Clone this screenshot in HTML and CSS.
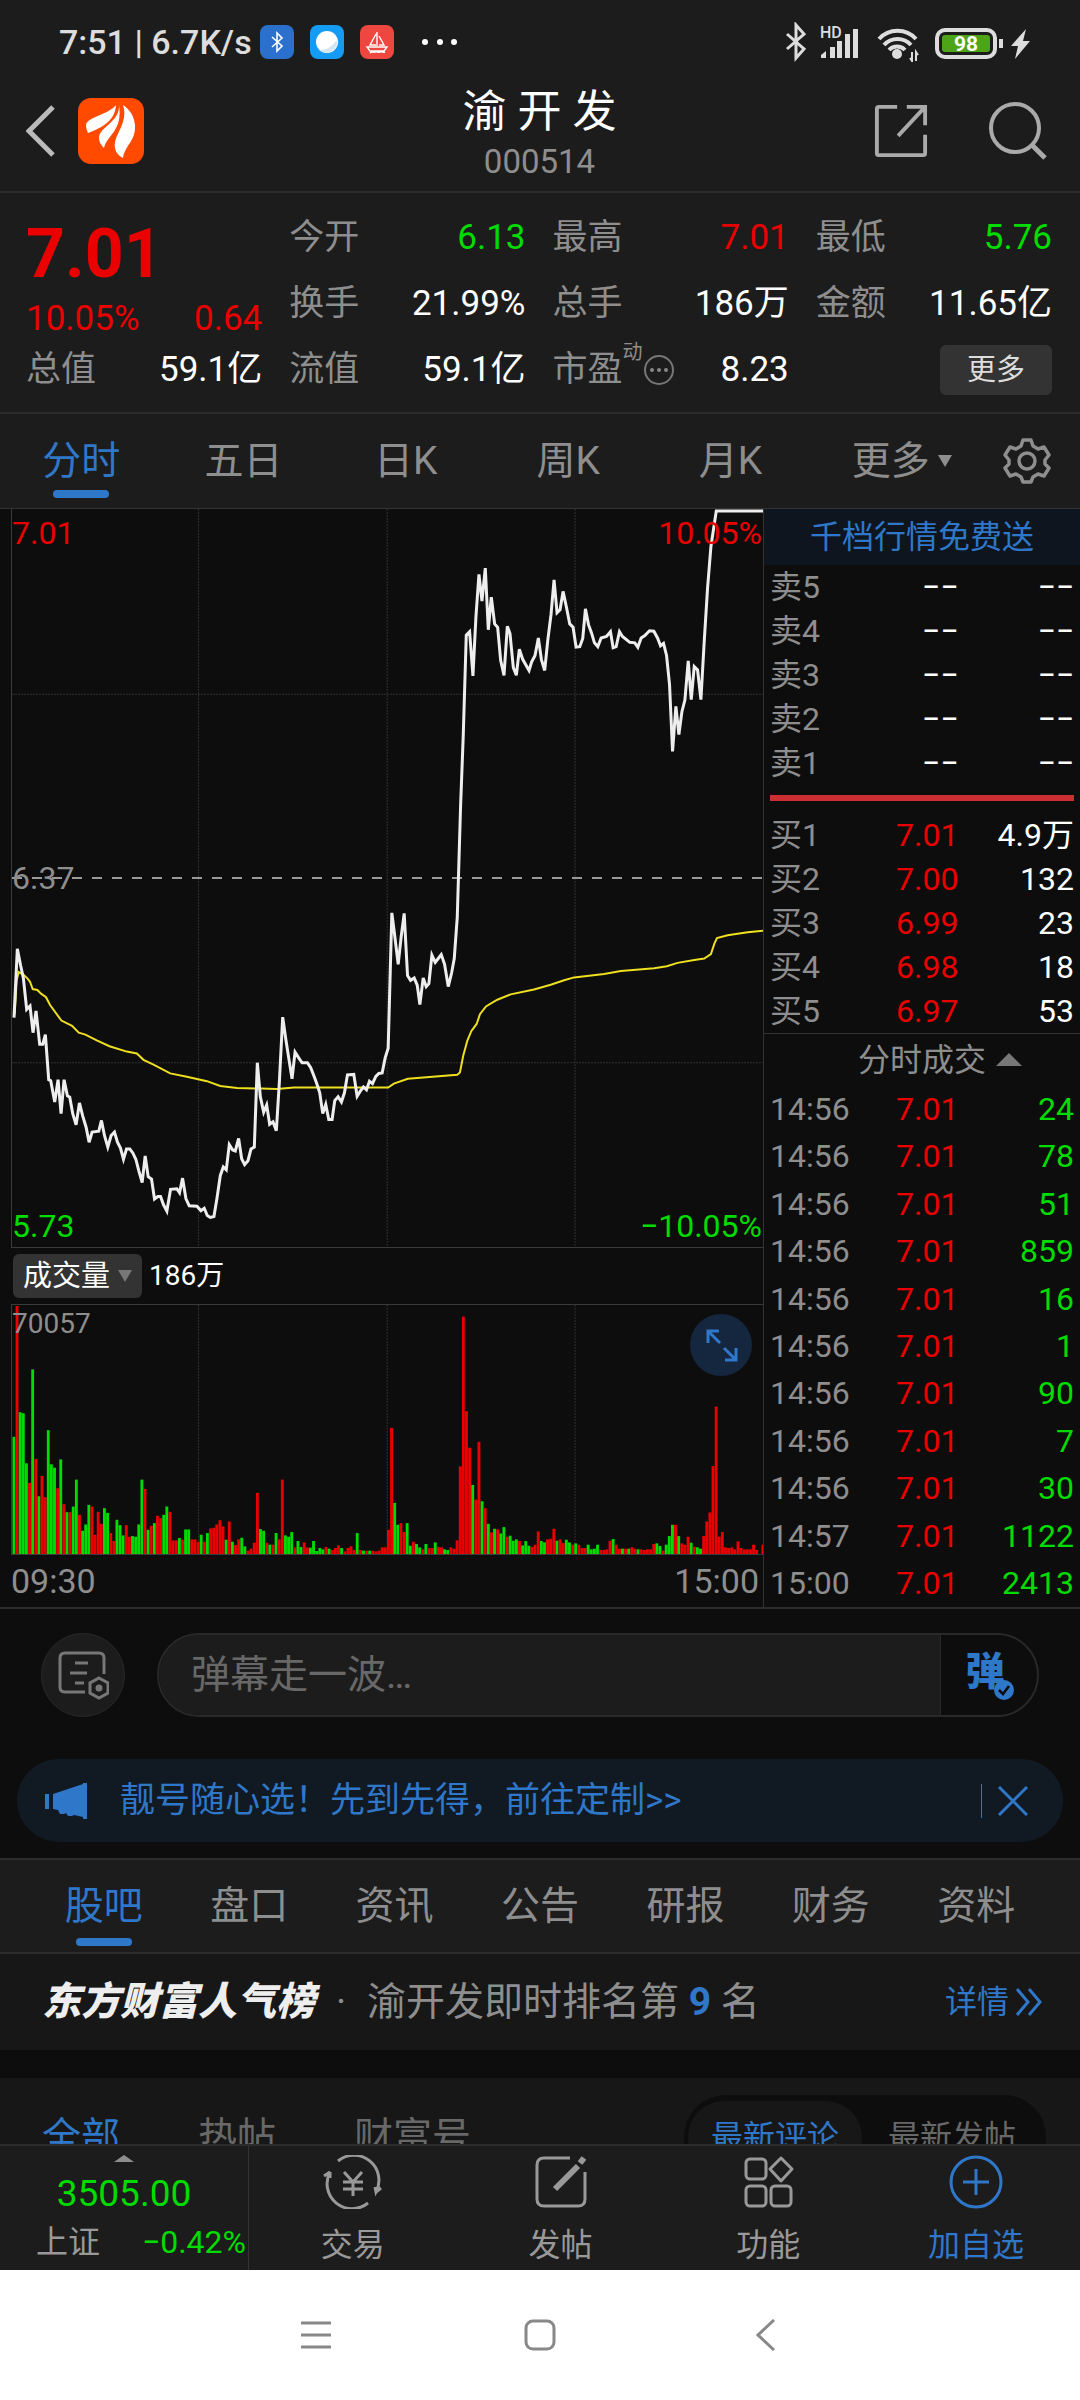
FILE: index.html
```html
<!DOCTYPE html>
<html lang="zh-CN">
<head>
    <meta charset="utf-8">
    <meta name="viewport" content="width=device-width">
    <title>渝开发 000514</title>
    <link rel="stylesheet" href="styles.css">
</head>
<body>

<div class="status-bar">
    <span class="status-time">7:51 | 6.7K/s</span>
    <svg class="app-icon" viewBox="0 0 34 34"><rect width="34" height="34" rx="8" fill="#2a70cc"/><path d="M12 12l10 9-5 5V8l5 5-10 9" fill="none" stroke="#fff" stroke-width="1.6"/></svg>
    <svg class="app-icon" viewBox="0 0 34 34"><rect width="34" height="34" rx="8" fill="#149cf5"/><circle cx="17" cy="17" r="11" fill="#fff"/><path d="M27 15a11 11 0 0 1-18 10c9 0 13-4 18-10z" fill="#d5e6f2"/></svg>
    <svg class="app-icon" viewBox="0 0 34 34"><rect width="34" height="34" rx="8" fill="#ee4740"/><path d="M17 7v14M16 9l-6 11h6M19 11l5 9h-5M7 22h20l-3 4h-14zM10 28c2-2 3 0 5-1s3 1 5 0 3 1 5 0" fill="none" stroke="#fff" stroke-width="1.4"/></svg>
    <svg class="status-dots" viewBox="0 0 40 8"><g fill="#fff"><circle cx="5" cy="4" r="3"/><circle cx="20" cy="4" r="3"/><circle cx="34" cy="4" r="3"/></g></svg>
    <svg class="status-icons" viewBox="0 0 250 40">
        <path d="M7 12l17 15-8 9V3l8 9L7 27" fill="none" stroke="#ddd" stroke-width="3"/>
        <g fill="#ddd">
            <path d="M41 36v-3l5-4v7zM50 25h5v11h-5zM57 19h5v17h-5zM65 12h5v24h-5zM73 7h5v29h-5z"/>
            <circle cx="117" cy="32" r="5"/>
            <path d="M219 17h4v9h-4zM246 7l-15 17h7l-3 13 15-18h-7z"/>
        </g>
        <path d="M99 17a25 25 0 0 1 37 0M104 23a18 18 0 0 1 27 0M109 28a11 11 0 0 1 16 0" fill="none" stroke="#ddd" stroke-width="4"/>
        <path d="M132 30v9l-2-3M136 39v-9l2 3" fill="none" stroke="#ddd" stroke-width="2"/>
        <rect x="157" y="8" width="58" height="27" rx="8" fill="none" stroke="#ddd" stroke-width="4"/>
        <rect x="162" y="13" width="48" height="17" rx="3" fill="#4da416"/>
        <text x="186" y="29" class="battery-text">98</text>
        <text x="40" y="16" class="hd-text">HD</text>
    </svg>
</div>

<header class="header">
    <button class="icon-button back" aria-label="返回">
        <svg viewBox="0 0 30 52"><path d="M27 2L3 26l24 24" fill="none" stroke="#bbb" stroke-width="5"/></svg>
    </button>
    <svg class="logo" viewBox="0 0 66 66">
        <rect width="66" height="66" rx="13" fill="#ff4a00"/>
        <g fill="#fff">
            <path d="M38 7C30 17 9 19 8 27c0 3 1 6 2 8 10-4 27-10 28-28z"/>
            <path d="M41 7c1 17-20 22-20 33 0 4 2 7 5 10 3-13 19-17 15-43z"/>
            <path d="M45 7c6 19-10 29-8 43 1 5 4 8 8 10 2-13 13-17 12-33C56 17 51 11 45 7z"/>
        </g>
    </svg>
    <div class="header-title">
        <h1>渝 开 发</h1>
        <div class="stock-code">000514</div>
    </div>
    <button class="icon-button share" aria-label="分享">
        <svg viewBox="0 0 56 56"><path d="M24 3H5q-2 0-2 2v46q0 2 2 2h46q2 0 2-2V32M34 3h19v19M53 3L25 33" fill="none" stroke="#aaa" stroke-width="4"/></svg>
    </button>
    <button class="icon-button search" aria-label="搜索">
        <svg viewBox="0 0 60 60"><circle cx="27" cy="27" r="24" fill="none" stroke="#aaa" stroke-width="4"/><path d="M44 44l13 13" stroke="#aaa" stroke-width="5"/></svg>
    </button>
</header>

<section class="quote">
    <div class="quote-col">
        <div class="price">7.01</div>
        <div class="change"><span>10.05%</span><span>0.64</span></div>
        <div class="quote-row"><span>总值</span><b>59.1亿</b></div>
    </div>
    <div class="quote-col">
        <div class="quote-row"><span>今开</span><b class="down">6.13</b></div>
        <div class="quote-row"><span>换手</span><b>21.99%</b></div>
        <div class="quote-row"><span>流值</span><b>59.1亿</b></div>
    </div>
    <div class="quote-col">
        <div class="quote-row"><span>最高</span><b class="up">7.01</b></div>
        <div class="quote-row"><span>总手</span><b>186万</b></div>
        <div class="quote-row">
            <span class="pe">市盈<sup>动</sup><svg viewBox="0 0 32 32"><circle cx="16" cy="16" r="14" fill="none" stroke="#777" stroke-width="2"/><g fill="#888"><circle cx="9" cy="16" r="2"/><circle cx="16" cy="16" r="2"/><circle cx="23" cy="16" r="2"/></g></svg></span>
            <b>8.23</b>
        </div>
    </div>
    <div class="quote-col">
        <div class="quote-row"><span>最低</span><b class="down">5.76</b></div>
        <div class="quote-row"><span>金额</span><b>11.65亿</b></div>
        <div class="quote-row right"><button class="more-button">更多</button></div>
    </div>
</section>

<nav class="tabs">
    <button class="tab active">分时</button>
    <button class="tab">五日</button>
    <button class="tab">日K</button>
    <button class="tab">周K</button>
    <button class="tab">月K</button>
    <button class="tab tab-more">更多<svg class="caret" viewBox="0 0 14 12"><path d="M0 0h14L7 12z" fill="#8e8e8e"/></svg></button>
    <button class="settings" aria-label="设置">
        <svg viewBox="0 0 48 48" fill="none" stroke="#8e8e8e" stroke-width="3.5" stroke-linejoin="round"><path d="M20 3h8l2 6 5 3 6-2 5 8-4 5v4l4 4-5 8-6-2-5 3-2 5h-8l-2-5-5-3-6 2-5-8 4-4v-4l-4-5 5-8 6 2 5-3z"/><circle cx="24" cy="24" r="8"/></svg>
    </button>
</nav>

<main class="content">
    <section class="market">
        <div class="charts">
            <div class="price-chart">
                <svg viewBox="36 18 2250 1522" preserveAspectRatio="none">
                    <g class="grid-lines">
                        <path d="M595 18V1540M1160 18V1540M1723 18V1540M36 400H2286M36 1160H2286"/>
                    </g>
                    <path class="mid-line" d="M36 779H2286"/>
                    <polyline class="avg-line" points="44,1060 50,990 56,973 70,978 82,986 90,993 98,1008 112,1010 124,1018 138,1025 150,1041 184,1073 216,1084 236,1098 256,1102 290,1114 328,1126 380,1137 410,1141 430,1154 460,1164 510,1182 560,1189 620,1198 660,1208 710,1212 830,1214 880,1211 1163,1211 1180,1203 1222,1193 1370,1185 1378,1180 1388,1145 1400,1115 1412,1095 1428,1080 1438,1060 1456,1044 1490,1030 1530,1019 1600,1009 1650,999 1690,990 1720,984 1810,977 1860,971 1960,965 1998,961 2030,954 2080,948 2110,945 2130,936 2140,915 2148,903 2180,897 2240,891 2286,888"/>
                    <polyline class="price-line" points="42,1067 52,925 62,960 70,985 80,1050 90,1043 99,1098 108,1053 119,1122 128,1122 136,1102 146,1195 152,1197 164,1241 174,1195 183,1265 192,1195 202,1228 209,1231 218,1265 228,1288 238,1243 248,1270 258,1293 267,1324 276,1303 296,1301 304,1279 313,1310 323,1334 333,1310 343,1303 352,1324 361,1336 370,1359 379,1338 389,1338 398,1346 407,1359 416,1383 426,1407 435,1352 444,1395 454,1400 463,1441 473,1436 481,1436 490,1453 500,1466 511,1421 530,1420 538,1428 547,1398 557,1440 567,1455 590,1456 602,1465 612,1460 621,1475 630,1479 641,1477 650,1440 660,1393 669,1375 678,1381 687,1329 697,1340 705,1342 715,1316 724,1358 733,1370 743,1362 752,1338 762,1334 771,1160 780,1230 790,1262 799,1247 808,1287 818,1282 828,1300 837,1200 847,1066 856,1110 865,1150 875,1193 884,1138 895,1150 905,1160 921,1160 931,1170 941,1188 950,1205 958,1222 967,1265 976,1246 985,1277 995,1277 1003,1238 1013,1230 1023,1241 1032,1222 1041,1185 1060,1184 1070,1229 1080,1218 1089,1210 1098,1216 1107,1198 1116,1203 1126,1188 1135,1182 1145,1181 1154,1150 1163,1130 1174,851 1183,900 1193,957 1202,900 1211,852 1221,980 1230,990 1241,985 1250,1000 1258,1040 1268,985 1277,1003 1285,997 1294,938 1304,953 1313,945 1322,937 1332,957 1343,1003 1353,975 1361,945 1370,860 1380,630 1388,484 1397,278 1407,271 1417,362 1426,240 1435,153 1444,208 1454,140 1463,267 1472,200 1482,255 1491,262 1500,330 1510,361 1520,260 1528,275 1538,345 1547,361 1556,307 1566,328 1585,351 1593,333 1603,320 1613,284 1622,328 1632,351 1641,290 1651,235 1660,164 1669,232 1678,226 1687,188 1697,220 1707,255 1717,262 1726,303 1737,302 1746,285 1754,224 1763,256 1772,273 1781,294 1791,302 1801,284 1817,281 1829,271 1837,304 1846,302 1856,271 1865,281 1887,293 1902,294 1911,303 1921,284 1932,279 1946,269 1959,270 1970,284 1979,300 1988,295 1997,320 2006,380 2015,518 2025,425 2034,483 2043,436 2052,412 2062,331 2071,411 2080,343 2090,350 2100,411 2110,290 2120,180 2130,95 2146,22 2286,22"/>
                </svg>
                <span class="axis top-left up">7.01</span>
                <span class="axis top-right up">10.05%</span>
                <span class="axis mid-left">6.37</span>
                <span class="axis bottom-left down">5.73</span>
                <span class="axis bottom-right down">−10.05%</span>
            </div>
            <div class="volume-bar">
                <button class="indicator">成交量<svg class="caret" viewBox="0 0 14 12"><path d="M0 0h14L7 12z" fill="#777"/></svg></button>
                <span>186万</span>
            </div>
            <div class="volume-chart">
                <svg id="volume" viewBox="36 0 2250 750" preserveAspectRatio="none">
                    <g class="grid-lines"><path d="M595 0V750M1160 0V750M1723 0V750"/></g>
                </svg>
                <span class="axis volume-max">70057</span>
                <button class="expand" aria-label="全屏">
                    <svg viewBox="0 0 62 62"><path d="M29 17H18v12M18 17l12 12M35 46h11V34M46 46L34 34" fill="none" stroke="#2f77c9" stroke-width="3"/></svg>
                </button>
            </div>
            <div class="time-axis"><span>09:30</span><span>15:00</span></div>
        </div>

        <aside class="order-book">
            <a class="promo" href="#">千档行情免费送</a>
            <table class="levels">
                <tr><th>卖5</th><td>−−</td><td>−−</td></tr>
                <tr><th>卖4</th><td>−−</td><td>−−</td></tr>
                <tr><th>卖3</th><td>−−</td><td>−−</td></tr>
                <tr><th>卖2</th><td>−−</td><td>−−</td></tr>
                <tr><th>卖1</th><td>−−</td><td>−−</td></tr>
            </table>
            <div class="ratio"></div>
            <table class="levels">
                <tr><th>买1</th><td class="up">7.01</td><td>4.9万</td></tr>
                <tr><th>买2</th><td class="up">7.00</td><td>132</td></tr>
                <tr><th>买3</th><td class="up">6.99</td><td>23</td></tr>
                <tr><th>买4</th><td class="up">6.98</td><td>18</td></tr>
                <tr><th>买5</th><td class="up">6.97</td><td>53</td></tr>
            </table>
            <button class="trades-title">分时成交<svg viewBox="0 0 26 13"><path d="M0 13h26L13 0z" fill="#777"/></svg></button>
            <table class="levels trades">
                <tr><th>14:56</th><td class="up">7.01</td><td class="down">24</td></tr>
                <tr><th>14:56</th><td class="up">7.01</td><td class="down">78</td></tr>
                <tr><th>14:56</th><td class="up">7.01</td><td class="down">51</td></tr>
                <tr><th>14:56</th><td class="up">7.01</td><td class="down">859</td></tr>
                <tr><th>14:56</th><td class="up">7.01</td><td class="down">16</td></tr>
                <tr><th>14:56</th><td class="up">7.01</td><td class="down">1</td></tr>
                <tr><th>14:56</th><td class="up">7.01</td><td class="down">90</td></tr>
                <tr><th>14:56</th><td class="up">7.01</td><td class="down">7</td></tr>
                <tr><th>14:56</th><td class="up">7.01</td><td class="down">30</td></tr>
                <tr><th>14:57</th><td class="up">7.01</td><td class="down">1122</td></tr>
                <tr><th>15:00</th><td class="up">7.01</td><td class="down">2413</td></tr>
            </table>
        </aside>
    </section>

    <div class="danmu">
        <button class="danmu-settings" aria-label="弹幕设置">
            <svg viewBox="0 0 52 52" fill="none" stroke="#777" stroke-width="3"><path d="M28 42H8q-5 0-5-5V8q0-5 5-5h34q5 0 5 5v16"/><path d="M18 13h13M13 23h17M18 33h9"/><path d="M42 28l9 5v10l-9 5-9-5V33z"/><circle cx="42" cy="38" r="2" fill="#777"/></svg>
        </button>
        <div class="danmu-field">
            <input type="text" placeholder="弹幕走一波…" aria-label="弹幕">
            <button class="danmu-toggle">弹<svg viewBox="0 0 22 22"><circle cx="11" cy="11" r="10" fill="#2f77c9"/><path d="M6 11l4 4 6-8" fill="none" stroke="#0d0d0d" stroke-width="2.5"/></svg></button>
        </div>
    </div>

    <div class="notice">
        <svg class="horn" viewBox="0 0 42 36"><path d="M0 11h4v15H0zM8 11L38 1V0h4v36h-4v-2l-9-2-2 1h-4l-2-3-2 1h-4l-2-4-5-1z" fill="#2f77c9"/></svg>
        <a href="#">靓号随心选！先到先得，前往定制&gt;&gt;</a>
        <button class="notice-close" aria-label="关闭"><svg viewBox="0 0 30 30"><path d="M1 1l28 28M29 1L1 29" stroke="#2f77c9" stroke-width="3"/></svg></button>
    </div>

    <nav class="tabs info-tabs">
        <button class="tab active">股吧</button>
        <button class="tab">盘口</button>
        <button class="tab">资讯</button>
        <button class="tab">公告</button>
        <button class="tab">研报</button>
        <button class="tab">财务</button>
        <button class="tab">资料</button>
    </nav>

    <div class="rank">
        <span class="rank-brand">东方财富人气榜</span>
        <span class="rank-dot">·</span>
        <span>渝开发即时排名第 <b>9</b> 名</span>
        <a href="#">详情<svg viewBox="0 0 28 30"><path d="M2 2l11 13L2 28M14 2l11 13-11 13" fill="none" stroke="#2f77c9" stroke-width="3"/></svg></a>
    </div>

    <div class="feed">
        <button class="feed-tab active">全部</button>
        <button class="feed-tab">热帖</button>
        <button class="feed-tab">财富号</button>
        <div class="sort">
            <button class="active">最新评论</button>
            <button>最新发帖</button>
        </div>
    </div>
</main>

<footer class="bottom-bar">
    <button class="index">
        <svg viewBox="0 0 20 7"><path d="M0 7h20L10 0z" fill="#8e8e8e"/></svg>
        <span class="index-value">3505.00</span>
        <span class="index-row"><span>上证</span><span class="down">−0.42%</span></span>
    </button>
    <button class="action">
        <svg viewBox="0 0 60 54" fill="none" stroke="#999" stroke-width="3"><path d="M15 6A25 25 0 0 1 53 37l-1-5M53 37l5-4M45 48A25 25 0 0 1 7 17l-6 4M7 17v6"/><path d="M21 17l9 10 9-10M30 27v14M20 27h20M20 34h20"/></svg>
        交易
    </button>
    <button class="action">
        <svg viewBox="0 0 60 54" fill="none" stroke="#999" stroke-width="3"><path d="M39 3H13q-7 0-7 7v34q0 7 7 7h34q7 0 7-7V17"/><path d="M47 11L24 34" stroke-width="6"/><path d="M49 8l4-5" stroke-width="6"/></svg>
        发帖
    </button>
    <button class="action">
        <svg viewBox="0 0 60 54" fill="none" stroke="#999" stroke-width="3"><rect x="8" y="4" width="20" height="20" rx="4"/><rect x="8" y="31" width="20" height="20" rx="4"/><rect x="33" y="31" width="20" height="20" rx="4"/><path d="M43 3l11 11-11 12-11-12z" stroke-linejoin="round"/></svg>
        功能
    </button>
    <button class="action primary">
        <svg viewBox="0 0 60 54" fill="none" stroke="#2f77c9" stroke-width="3"><circle cx="30" cy="27" r="25"/><path d="M30 14v26M17 27h26"/></svg>
        加自选
    </button>
</footer>

<div class="system-nav">
    <button aria-label="菜单"><svg viewBox="0 0 32 32"><path d="M1 4h30M1 16h30M1 28h30" stroke="#888" stroke-width="3"/></svg></button>
    <button aria-label="主页"><svg viewBox="0 0 32 32"><rect x="2" y="2" width="28" height="28" rx="7" fill="none" stroke="#888" stroke-width="3"/></svg></button>
    <button aria-label="返回"><svg viewBox="0 0 32 32"><path d="M26 1L10 16l16 15" fill="none" stroke="#888" stroke-width="3"/></svg></button>
</div>

<script src="script.js"></script>
</body>
</html>
```
FILE: styles.css
```css
* {
    box-sizing: border-box;
}

body {
    display: flex;
    flex-direction: column;
    height: 100vh;
    margin: 0;
    background: #1c1c1c;
    color: #8e8e8e;
    font-family: Roboto, "Noto Sans CJK SC", sans-serif;
    font-size: 32px;
    line-height: 40px;
    overflow: hidden;
}

button {
    padding: 0;
    border: 0;
    background: none;
    color: inherit;
    font: inherit;
}

a {
    color: #2f77c9;
    text-decoration: none;
}

svg {
    display: block;
    flex: none;
}

.up {
    color: #ea0000;
}

.down {
    color: #00dc00;
}

/* Status bar */

.status-bar {
    display: flex;
    align-items: center;
    height: 84px;
    padding: 0 50px 0 59px;
    gap: 16px;
    flex: none;
    color: #ddd;
}

.status-time {
    font-size: 34px;
    font-weight: 500;
    margin-right: -8px;
}

.app-icon {
    width: 34px;
    height: 34px;
}

.status-dots {
    width: 40px;
    height: 8px;
    margin-left: 10px;
}

.status-icons {
    width: 250px;
    height: 40px;
    margin-left: auto;
}

.battery-text {
    fill: #fff;
    font-size: 21px;
    font-weight: 700;
    text-anchor: middle;
}

.hd-text {
    fill: #ddd;
    font-size: 16px;
    font-weight: 500;
}

/* Header */

.header {
    display: flex;
    align-items: center;
    height: 109px;
    padding: 0 32px 14px 26px;
    flex: none;
    border-bottom: 2px solid #2c2c2c;
}

.header-title {
    flex: 1;
    padding: 8px 24px 0 0;
    text-align: center;
}

h1 {
    margin: 0;
    color: #fff;
    font-size: 44px;
    font-weight: 400;
    line-height: 54px;
}

.stock-code {
    font-size: 33px;
    line-height: 46px;
}

.back svg {
    width: 30px;
    height: 52px;
}

.logo {
    width: 66px;
    height: 66px;
    margin: 0 85px 0 22px;
}

.share svg {
    width: 54px;
    height: 54px;
}

.search svg {
    width: 60px;
    height: 60px;
    margin-left: 60px;
}

/* Quote */

.quote {
    display: flex;
    gap: 27px;
    padding: 12px 28px 9px 26px;
    flex: none;
    border-bottom: 2px solid #2c2c2c;
    font-size: 35px;
}

.quote-col {
    flex: 1;
}

.price {
    height: 94px;
    color: #ea0000;
    font-size: 68px;
    font-weight: 700;
    line-height: 98px;
}

.change {
    display: flex;
    justify-content: space-between;
    height: 38px;
    color: #ea0000;
}

.quote-row {
    display: flex;
    align-items: center;
    justify-content: space-between;
    height: 66px;
}

.quote-row.right {
    justify-content: flex-end;
}

.quote-row b {
    font-weight: 400;
}

.quote-row b:not([class]) {
    color: #fff;
}

.pe {
    display: flex;
    align-items: center;
}

.pe sup {
    align-self: flex-start;
    font-size: 20px;
    line-height: 20px;
    margin-top: -8px;
}

.pe svg {
    width: 32px;
    height: 32px;
}

.more-button {
    width: 112px;
    height: 50px;
    border-radius: 6px;
    background: #333;
    color: #ddd;
    font-size: 29px;
}

/* Tabs */

.tabs {
    display: flex;
    height: 94px;
    flex: none;
}

.tab {
    display: flex;
    align-items: center;
    justify-content: center;
    position: relative;
    flex: 1;
    font-size: 39px;
}

.tab.active {
    color: #2f77c9;
}

.tab.active::after {
    content: "";
    position: absolute;
    bottom: 10px;
    width: 56px;
    height: 8px;
    border-radius: 4px;
    background: #2f77c9;
}

.caret {
    width: 14px;
    height: 12px;
    margin-left: 8px;
}

.tab-more .caret {
    margin-right: -18px;
}

.settings {
    width: 106px;
}

.settings svg {
    width: 48px;
    height: 48px;
    margin: auto;
}

/* Content */

.content {
    display: flex;
    flex-direction: column;
    flex: 1;
    min-height: 0;
    overflow: hidden;
    background: #0d0d0d;
}

.market {
    display: flex;
    flex: none;
    border-top: 1px solid #333;
    border-bottom: 2px solid #2c2c2c;
}

.charts {
    flex: 1;
    min-width: 0;
    padding-left: 11px;
}

.price-chart,
.volume-chart {
    position: relative;
    border-left: 1px solid #3a3a3a;
    border-bottom: 1px solid #3a3a3a;
}

.price-chart svg {
    width: 100%;
    height: 738px;
}

.volume-chart > svg {
    width: 100%;
    height: 249px;
}

.volume-chart {
    border-top: 1px solid #3a3a3a;
}

.charts path,
.charts polyline {
    fill: none;
    vector-effect: non-scaling-stroke;
}

.charts .caret path {
    fill: #777;
}

.grid-lines {
    stroke: #303030;
    stroke-dasharray: 2 1;
}

.mid-line {
    stroke: #999;
    stroke-width: 2;
    stroke-dasharray: 10 10;
}

.avg-line {
    stroke: #eedf20;
    stroke-width: 2;
}

.price-line {
    stroke: #eee;
    stroke-width: 3;
}

.axis {
    position: absolute;
    left: 0;
    line-height: 32px;
}

.top-left,
.top-right {
    top: 8px;
}

.top-right,
.bottom-right {
    left: auto;
    right: 1px;
}

.mid-left {
    top: 353px;
}

.bottom-left,
.bottom-right {
    bottom: 5px;
}

.volume-max {
    top: 3px;
    font-size: 28px;
}

.volume-bar {
    display: flex;
    align-items: center;
    gap: 7px;
    height: 56px;
    padding-left: 2px;
    color: #fff;
    font-size: 28px;
}

.indicator {
    display: flex;
    align-items: center;
    height: 44px;
    padding: 0 10px;
    border-radius: 6px;
    background: #333;
    font-size: 29px;
}

.expand {
    position: absolute;
    top: 9px;
    right: 11px;
    width: 62px;
    height: 62px;
    border-radius: 50%;
    background: #15263f;
}

.time-axis {
    display: flex;
    justify-content: space-between;
    align-items: center;
    height: 52px;
    padding: 0 4px 0 0;
    font-size: 34px;
}

/* Order book */

.order-book {
    display: flex;
    flex-direction: column;
    width: 317px;
    border-left: 1px solid #333;
}

.promo {
    height: 56px;
    background: #0e151e;
    line-height: 56px;
    text-align: center;
}

.levels {
    width: 100%;
    padding: 0 6px;
    border-spacing: 0;
    table-layout: fixed;
    color: #fff;
}

.levels tr {
    height: 44px;
}

.levels th {
    width: 30%;
    padding: 0;
    color: #8e8e8e;
    font-weight: 400;
    text-align: left;
}

.levels td {
    width: 32%;
    padding: 0;
    text-align: right;
}

.levels td:last-child {
    width: 38%;
}

.ratio {
    height: 6px;
    margin: 10px 6px 12px;
    background: #cb2f32;
}

.trades-title {
    display: flex;
    align-items: center;
    justify-content: center;
    gap: 10px;
    height: 52px;
    padding-left: 36px;
    border-top: 1px solid #333;
}

.trades-title svg {
    width: 26px;
    height: 13px;
}

.trades {
    flex: 1;
}

.trades tr {
    height: 46px;
}

/* Danmu */

.danmu {
    display: flex;
    gap: 32px;
    padding: 24px 41px 42px;
    flex: none;
}

.danmu-settings {
    width: 84px;
    height: 84px;
    border: 1px solid #292929;
    border-radius: 50%;
    background: #1c1c1c;
}

.danmu-settings svg {
    width: 52px;
    height: 52px;
    margin: 2px auto 0;
}

.danmu-field {
    display: flex;
    flex: 1;
    height: 84px;
    border: 2px solid #292929;
    border-radius: 42px;
    overflow: hidden;
}

.danmu-field input {
    flex: 1;
    min-width: 0;
    padding: 0 32px;
    border: 0;
    border-right: 1px solid #292929;
    background: #1c1c1c;
    color: #fff;
    font: inherit;
    font-size: 39px;
}

.danmu-field input::placeholder {
    color: #686868;
}

.danmu-toggle {
    position: relative;
    width: 96px;
    padding: 0 8px 6px 0;
    color: #2f77c9;
    font-size: 39px;
    font-weight: 900;
}

.danmu-toggle svg {
    position: absolute;
    right: 22px;
    bottom: 14px;
    width: 22px;
    height: 22px;
}

/* Notice */

.notice {
    display: flex;
    align-items: center;
    height: 83px;
    margin: 0 17px 16px;
    padding: 0 35px 0 28px;
    flex: none;
    border-radius: 42px;
    background: #111a23;
    font-size: 35px;
}

.notice a {
    flex: 1;
}

.horn {
    width: 42px;
    height: 36px;
    margin-right: 33px;
}

.notice-close {
    padding: 2px 0 2px 16px;
    border-left: 1px solid #2f77c9;
}

.notice-close svg {
    width: 30px;
    height: 30px;
}

/* Info */

.info-tabs {
    height: 96px;
    padding: 0 31px;
    border-top: 2px solid #2c2c2c;
    border-bottom: 2px solid #2c2c2c;
    background: #1c1c1c;
}

.info-tabs .tab.active::after {
    bottom: 6px;
}

.rank {
    display: flex;
    align-items: center;
    height: 96px;
    padding: 0 37px 0 42px;
    flex: none;
    background: #171717;
    font-size: 39px;
}

.rank-brand {
    color: #eee;
    font-style: italic;
    font-weight: 900;
}

.rank-dot {
    width: 52px;
    text-align: center;
}

.rank b {
    color: #2f77c9;
}

.rank a {
    display: flex;
    align-items: center;
    gap: 6px;
    margin-left: auto;
    font-size: 32px;
}

.rank a svg {
    width: 28px;
    height: 30px;
}

.feed {
    display: flex;
    align-items: center;
    gap: 78px;
    height: 118px;
    margin-top: 28px;
    padding: 0 34px 0 42px;
    flex: none;
    background: #171717;
    color: #686868;
    font-size: 39px;
}

.feed .active {
    color: #2f77c9;
}

.sort {
    display: flex;
    height: 84px;
    margin-left: auto;
    padding: 6px 4px;
    border-radius: 42px;
    background: #0d0d0d;
    font-size: 32px;
}

.sort button {
    width: 174px;
    border-radius: 36px;
}

.sort button + button {
    width: 180px;
}

.sort .active {
    background: #171717;
}

/* Bottom bar */

.bottom-bar {
    display: flex;
    height: 126px;
    flex: none;
    border-top: 2px solid #2c2c2c;
    color: #999;
}

.index {
    display: flex;
    flex-direction: column;
    align-items: center;
    width: 249px;
    padding-top: 9px;
    border-right: 1px solid #333;
}

.index svg {
    width: 20px;
    height: 7px;
}

.index-value {
    color: #00dc00;
    font-size: 37px;
    line-height: 64px;
}

.index-row {
    display: flex;
    justify-content: space-between;
    width: 100%;
    padding: 0 2px 0 36px;
    line-height: 32px;
}

.action {
    display: flex;
    flex-direction: column;
    align-items: center;
    flex: 1;
    gap: 16px;
    padding-top: 9px;
}

.action svg {
    width: 60px;
    height: 54px;
}

.action.primary {
    color: #2f77c9;
}

/* System navigation */

.system-nav {
    display: flex;
    height: 130px;
    padding: 0 204px;
    flex: none;
    background: #fff;
}

.system-nav button {
    flex: 1;
}

.system-nav svg {
    width: 32px;
    height: 32px;
    margin: auto;
}
```
FILE: script.js
```js
// One bar per minute, r = up, g = down, number = height out of 750
const volumes = 'g353 r747 g427 g424 g273 r214 g556 r286 g174 r235 r171 g373 g270 g260 r198 g285 r150 g126 r126 g143 g224 r118 g70 g89 g148 r143 r58 r127 r91 g138 g124 r63 r39 g103 g87 g56 r87 r52 g54 g52 g89 g224 r196 g73 r85 g93 r115 r108 g118 g143 r127 r41 r41 g48 r43 g74 g74 r44 r44 r37 ' +
    'g58 r37 g63 r77 r79 r89 r102 r83 g43 r98 g37 r27 r44 g49 g23 r10 r16 r34 r184 g75 g70 r34 g28 r28 g63 r44 r224 g56 g52 g66 r20 g39 g21 r35 r20 g19 g39 g9 g18 g14 r21 g16 r12 r18 r26 g18 r8 r18 r23 r12 g63 r12 g10 r10 g10 r10 r8 r10 r20 r20 ' +
    'r73 r380 g154 g88 r93 r66 g93 g25 r37 g30 g20 r14 g30 r18 r18 g35 r21 r20 g14 g12 r20 r16 r41 r264 r715 r430 r320 g208 r164 r338 g159 r138 g91 r65 g76 r74 g62 g81 r52 g55 g40 g44 r39 g26 g39 g25 r21 r28 r68 g39 g35 r44 r46 r76 g40 r44 r33 g43 g35 r28 ' +
    'g32 r28 r18 r18 g28 g14 g16 g28 r12 r12 r14 r40 g45 r28 r16 g16 r16 g16 r20 r16 g14 r14 r12 r14 r14 r30 g32 g24 r10 g28 g54 g88 r88 g54 r32 r28 r52 g34 r22 g20 g16 r54 r98 r125 r265 r444 r52 r66 r20 r18 r20 r14 r38 r18 r14 r14 r14 r28 r12 r0 r28';

const chart = document.querySelector('#volume');
const step = 9.35;

volumes.split(' ').forEach(function (item, i) {
    const height = Number(item.slice(1));
    const bar = document.createElementNS('http://www.w3.org/2000/svg', 'rect');
    bar.setAttribute('x', 37.5 + i * step);
    bar.setAttribute('y', 750 - height);
    bar.setAttribute('width', 8.6);
    bar.setAttribute('height', height);
    bar.setAttribute('fill', item[0] === 'r' ? '#ea0000' : '#00dc00');
    chart.appendChild(bar);
});
```
